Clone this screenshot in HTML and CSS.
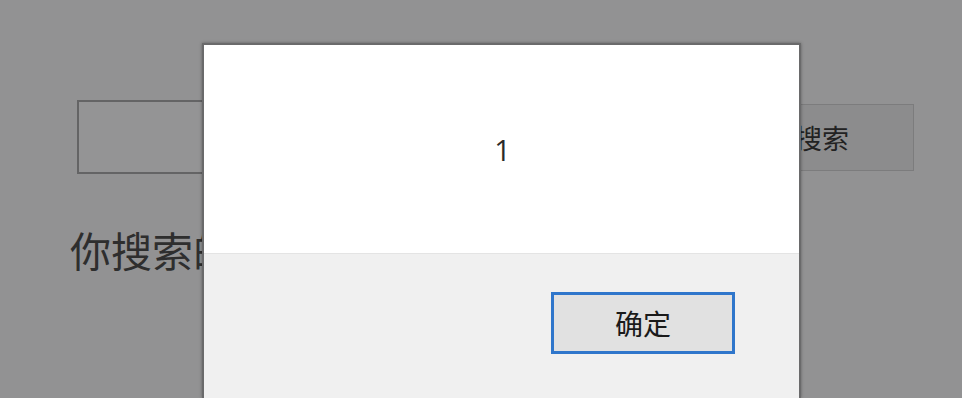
FILE: index.html
```html
<!DOCTYPE html>
<html lang="zh-CN">
<head>
<meta charset="utf-8">
<title>搜索</title>
<link rel="stylesheet" href="styles.css">
</head>
<body>
<div class="page">
  <div class="search-row">
    <div class="search-input"></div>
    <button class="search-btn">搜索</button>
  </div>
  <p class="result">你搜索的内容是：</p>
</div>
<div class="dialog">
  <div class="dialog-body">1</div>
  <div class="dialog-footer">
    <button class="ok-btn">确定</button>
  </div>
</div>
</body>
</html>
```

FILE: styles.css
```css
html, body {
  margin: 0;
  padding: 0;
  height: 100%;
  overflow: hidden;
}
body {
  background: #929293;
  font-family: "Noto Sans CJK SC", "Noto Sans", sans-serif;
  position: relative;
}
.page {
  padding: 100px 0 0 77px;
}
.search-row {
  display: flex;
  align-items: center;
}
.search-input {
  width: 650px;
  height: 74px;
  box-sizing: border-box;
  border: 2px solid #646465;
  background: #949495;
}
.search-btn {
  margin-left: 3px;
  width: 184px;
  height: 67px;
  box-sizing: border-box;
  border: 1px solid #7c7c7d;
  background: #8c8c8d;
  color: #222222;
  font-family: "Noto Sans CJK SC", sans-serif;
  font-size: 27px;
  padding: 0;
}
.result {
  margin: 52px 0 0 -7px;
  font-size: 41px;
  line-height: 46px;
  color: #2e2e2e;
}
.dialog {
  position: absolute;
  left: 202px;
  top: 43px;
  bottom: 0;
  width: 599px;
  box-sizing: border-box;
  border: 2px solid #6a6a6b;
  border-bottom: none;
  box-shadow: 0 0 3px rgba(0, 0, 0, 0.35);
  background: #f0f0f0;
  display: flex;
  flex-direction: column;
}
.dialog-body {
  height: 208px;
  flex: none;
  background: #ffffff;
  display: flex;
  align-items: center;
  justify-content: center;
  font-family: "Open Sans", "Noto Sans", sans-serif;
  font-size: 29px;
  font-weight: 500;
  color: #2a2a2a;
  padding-left: 2px;
}
.dialog-footer {
  border-top: 1px solid #e4e4e4;
  display: flex;
  justify-content: flex-end;
  padding: 38px 64px 0 0;
}
.ok-btn {
  width: 184px;
  height: 62px;
  box-sizing: border-box;
  border: 3px solid #2f76cb;
  background: #e1e1e1;
  color: #1a1a1a;
  font-family: "Noto Sans CJK SC", sans-serif;
  font-size: 28px;
  padding: 0;
}
```
